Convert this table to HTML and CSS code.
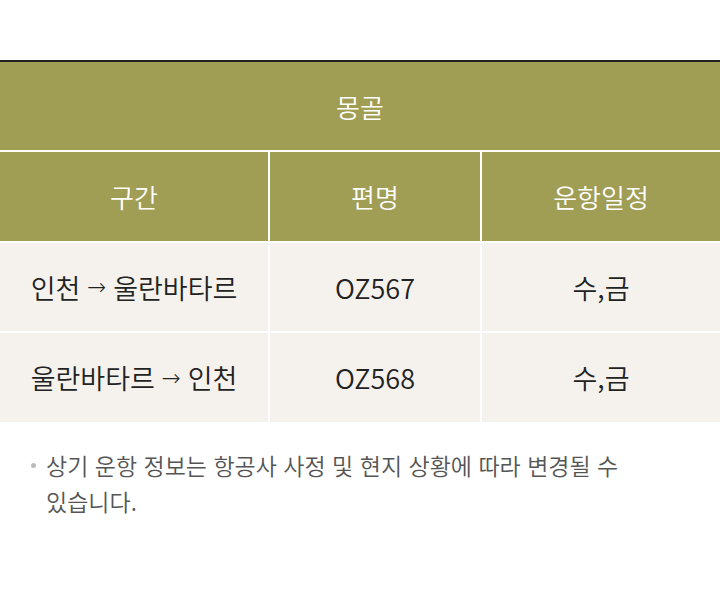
FILE: index.html
```html
<!DOCTYPE html>
<html lang="ko">
<head>
<meta charset="utf-8">
<link rel="stylesheet" href="styles.css">
</head>
<body>
<div class="schedule">
  <div class="cell head region">몽골</div>
  <div class="cell head">구간</div>
  <div class="cell head">편명</div>
  <div class="cell head">운항일정</div>
  <div class="cell body">인천 <span class="arrow">→</span> 울란바타르</div>
  <div class="cell body">OZ567</div>
  <div class="cell body">수,금</div>
  <div class="cell body">울란바타르 <span class="arrow">→</span> 인천</div>
  <div class="cell body">OZ568</div>
  <div class="cell body">수,금</div>
</div>
<ul class="notes">
  <li>상기 운항 정보는 항공사 사정 및 현지 상황에 따라 변경될 수 있습니다.</li>
</ul>
</body>
</html>
```
FILE: styles.css
```css
html, body {
  margin: 0;
  padding: 0;
  background: #fff;
}
body {
  font-family: "Noto Sans CJK KR", "Noto Sans", sans-serif;
  color: #222;
}
.schedule {
  margin-top: 60px;
  border-top: 2px solid #222;
  display: grid;
  grid-template-columns: 268px 210px 1fr;
  grid-template-rows: 88px 89px 88px 89px;
  gap: 2px;
  background: #fff;
}
.cell {
  display: flex;
  align-items: center;
  justify-content: center;
  gap: 0.25em;
  font-size: 26px;
  font-weight: 350;
}
.arrow {
  font-family: "DejaVu Sans", sans-serif;
  font-size: 23px;
}
.head {
  background: #a09d55;
  color: #fff;
}
.region {
  grid-column: 1 / -1;
}
.body {
  background: #f5f2ee;
  color: #222;
  font-size: 27px;
}
.notes {
  list-style: none;
  margin: 25px 0 0;
  padding: 0 60px 0 46px;
}
.notes li {
  position: relative;
  font-size: 23px;
  font-weight: 350;
  line-height: 36px;
  color: #555;
  word-break: keep-all;
}
.notes li::before {
  content: "";
  position: absolute;
  left: -15px;
  top: 16px;
  width: 5px;
  height: 5px;
  border-radius: 50%;
  background: #bbb;
}
```
